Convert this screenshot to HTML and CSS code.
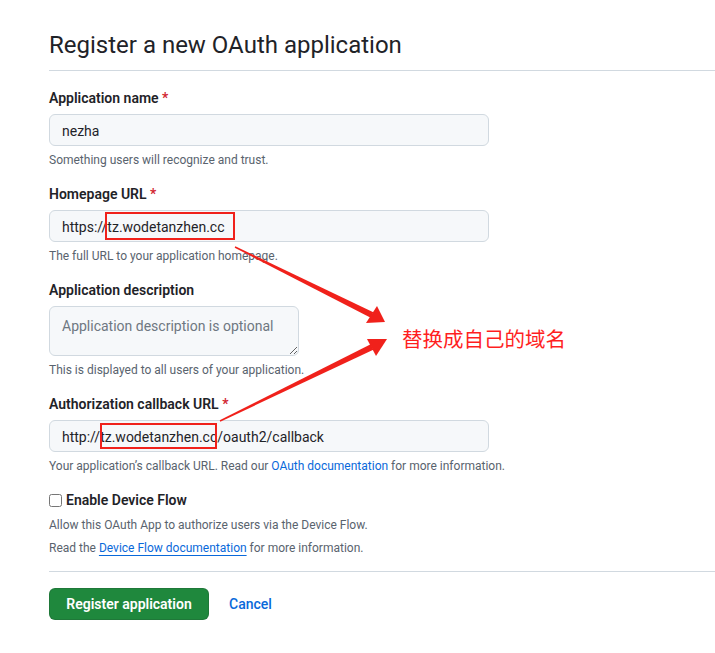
FILE: index.html
```html
<!DOCTYPE html>
<html lang="en">
<head>
    <meta charset="UTF-8">
    <title>Register a new OAuth application</title>
    <link rel="stylesheet" href="styles.css">
</head>
<body>
    <div class="page">
        <div class="subhead">
            <h2 class="subhead-heading">Register a new OAuth application</h2>
        </div>

        <form class="app-form">
            <!-- Application name -->
            <div class="form-group">
                <label class="form-label">Application name <span class="required">*</span></label>
                <input class="form-control" type="text" value="nezha">
                <p class="note">Something users will recognize and trust.</p>
            </div>

            <!-- Homepage -->
            <div class="form-group">
                <label class="form-label">Homepage URL <span class="required">*</span></label>
                <input class="form-control" type="text" value="https://tz.wodetanzhen.cc">
                <p class="note">The full URL to your application homepage.</p>
            </div>

            <!-- Description -->
            <div class="form-group">
                <label class="form-label">Application description</label>
                <textarea class="form-control textarea" placeholder="Application description is optional"></textarea>
                <p class="note">This is displayed to all users of your application.</p>
            </div>

            <!-- Callback -->
            <div class="form-group">
                <label class="form-label">Authorization callback URL <span class="required">*</span></label>
                <input class="form-control" type="text" value="http://tz.wodetanzhen.cc/oauth2/callback">
                <p class="note">Your application’s callback URL. Read our <a class="link" href="#">OAuth documentation</a> for more information.</p>
            </div>

            <!-- Device flow -->
            <div class="form-group">
                <label class="check-label"><input class="check" type="checkbox"> Enable Device Flow</label>
                <p class="note note-first">Allow this OAuth App to authorize users via the Device Flow.</p>
                <p class="note note-second">Read the <a class="link underline" href="#">Device Flow documentation</a> for more information.</p>
            </div>

            <div class="form-actions">
                <button class="btn-primary" type="button">Register application</button>
                <a class="btn-link" href="#">Cancel</a>
            </div>
        </form>

        <!-- Red annotation layer -->
        <svg class="annotations" width="715" height="653" viewBox="0 0 715 653">
            <rect x="106" y="213" width="128" height="26" fill="none" stroke="#f0211b" stroke-width="2"/>
            <rect x="101" y="424" width="115" height="24" fill="none" stroke="#f0211b" stroke-width="2"/>
            <polygon points="235.3,246.3 373.3,312.3 370.7,317.7 234.7,247.7" fill="#f0211b"/>
            <polygon points="385,322 366,323 377,306" fill="#f0211b"/>
            <polygon points="219.7,420.3 370.7,344.3 373.3,349.7 220.3,421.7" fill="#f0211b"/>
            <polygon points="387,339 367,339 376,356" fill="#f0211b"/>
        </svg>
        <div class="annotation-text">替换成自己的域名</div>
    </div>
</body>
</html>
```

FILE: styles.css
```css
body {
    margin: 0;
    background: #fff;
    font-family: Roboto, "Noto Sans", sans-serif;
    color: #1f2328;
}
.page {
    position: relative;
    width: 715px;
    height: 653px;
    padding: 27px 0 0 49px;
    box-sizing: border-box;
    overflow: hidden;
}
.subhead {
    padding-bottom: 7px;
    border-bottom: 1px solid #d1d9e0;
    margin-bottom: 16px;
}
.subhead-heading {
    margin: 0;
    font-size: 24px;
    font-weight: 400;
    line-height: 36px;
}
.form-group {
    display: flex;
    flex-direction: column;
    align-items: flex-start;
    margin-bottom: 14px;
}
.form-label {
    font-size: 14px;
    font-weight: 600;
    line-height: 20px;
    padding-top: 1px;
    margin-bottom: 6px;
}
.required {
    color: #d1242f;
}
.form-control {
    box-sizing: border-box;
    width: 440px;
    height: 32px;
    padding: 1px 12px 0;
    font-family: inherit;
    font-size: 14px;
    color: #1f2328;
    background: #f6f8fa;
    border: 1px solid #d1d9e0;
    border-radius: 6px;
    outline: none;
}
.textarea {
    width: 250px;
    height: 50px;
    padding: 9px 12px;
    line-height: 20px;
    resize: vertical;
}
.textarea::placeholder {
    color: #6e7781;
}
.note {
    margin: 5px 0 0;
    font-size: 12px;
    line-height: 18px;
    color: #59636e;
}
.note-first {
    margin-top: 6px;
}
.note-second {
    margin-top: 5px;
}
.link {
    color: #0969da;
    text-decoration: none;
}
.link.underline {
    text-decoration: underline;
    text-underline-offset: 3px;
}
.check-label {
    display: flex;
    align-items: center;
    font-size: 14px;
    font-weight: 600;
    line-height: 20px;
    padding-top: 1px;
}
.check {
    width: 13px;
    height: 13px;
    margin: 0 4px 0 0;
}
.form-actions {
    display: flex;
    align-items: center;
    border-top: 1px solid #d1d9e0;
    margin-top: 2px;
    padding-top: 16px;
}
.btn-primary {
    height: 32px;
    width: 160px;
    font-family: inherit;
    font-size: 14px;
    font-weight: 600;
    color: #fff;
    background: #1f883d;
    border: 1px solid rgba(31, 35, 40, 0.15);
    border-radius: 6px;
    cursor: pointer;
}
.btn-link {
    margin-left: 20px;
    font-size: 14px;
    font-weight: 500;
    color: #0969da;
    text-decoration: none;
}
.annotations {
    position: absolute;
    left: 0;
    top: 0;
    pointer-events: none;
}
.annotation-text {
    position: absolute;
    left: 402px;
    top: 325px;
    font-family: "Noto Sans CJK SC", sans-serif;
    font-size: 20.5px;
    line-height: 26px;
    color: #ff1f1f;
}
```
